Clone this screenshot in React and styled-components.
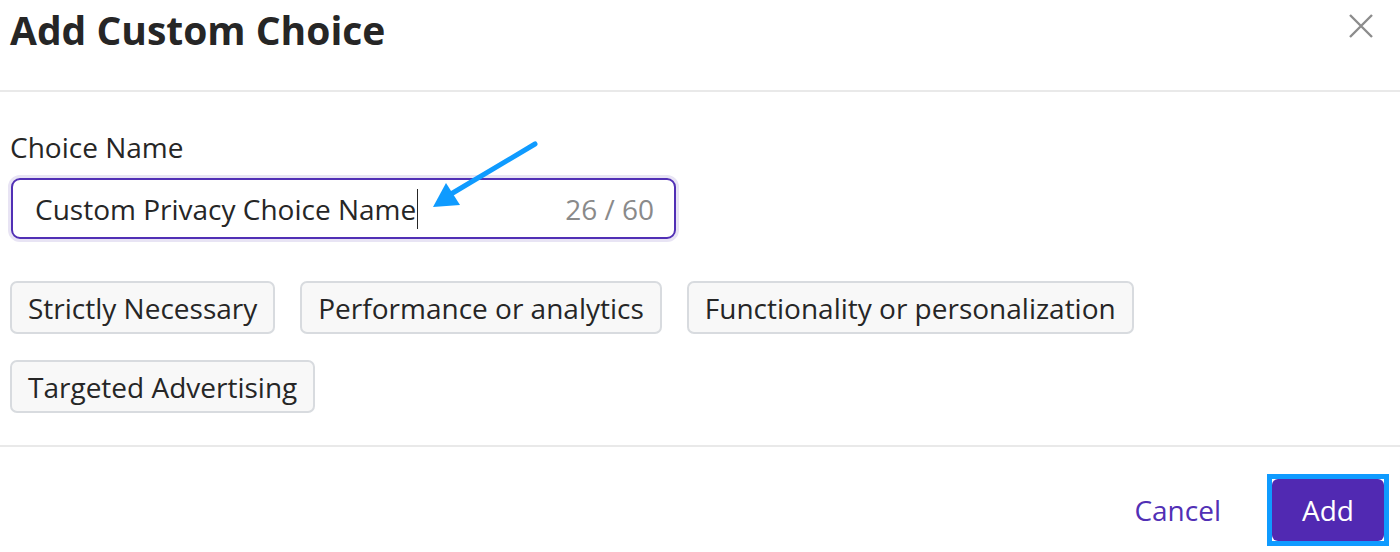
import styled, { createGlobalStyle } from "styled-components";

const GlobalStyle = createGlobalStyle`
  html, body {
    margin: 0;
    padding: 0;
    background: #ffffff;
    font-family: "Open Sans", "Noto Sans", sans-serif;
    color: #262626;
  }
`;

const Dialog = styled.div`
  width: 1400px;
  height: 552px;
  background: #fff;
  display: flex;
  flex-direction: column;
  overflow: hidden;
`;

const Header = styled.div`
  display: flex;
  justify-content: space-between;
  align-items: flex-start;
  height: 92px;
  padding: 0 26px 0 10px;
  border-bottom: 2px solid #e9e9e9;
  box-sizing: border-box;
`;

const Title = styled.h1`
  margin: 2px 0 0;
  font-size: 39px;
  font-weight: 700;
  line-height: 56px;
  color: #262626;
`;

const CloseButton = styled.button`
  margin-top: 13px;
  width: 26px;
  height: 26px;
  padding: 0;
  border: none;
  background: none;
  display: flex;
  align-items: center;
  justify-content: center;
`;

const Body = styled.div`
  padding: 36px 10px 0;
  height: 355px;
  box-sizing: border-box;
  border-bottom: 2px solid #e9e9e9;
  position: relative;
`;

const Label = styled.div`
  font-size: 28px;
  line-height: 38px;
  color: #262626;
  margin-bottom: 9px;
`;

const InputRing = styled.div`
  width: 671px;
  height: 67px;
  margin-left: -2px;
  box-sizing: border-box;
  border: 3px solid #e8e4f4;
  border-radius: 12px;
  display: flex;
`;

const InputBox = styled.div`
  flex: 1;
  border: 2px solid #5130b5;
  border-radius: 9px;
  display: flex;
  align-items: center;
  justify-content: space-between;
  padding: 0 20px 0 22px;
  font-size: 28px;
`;

const InputText = styled.span`
  color: #262626;
  border-right: 1.5px solid #262626;
  line-height: 40px;
  padding-right: 1px;
`;

const Counter = styled.span`
  color: #8a8a8a;
`;

const ChipList = styled.div`
  display: flex;
  flex-wrap: wrap;
  gap: 26px 25px;
  margin-top: 39px;
  width: 1200px;
`;

const Chip = styled.button`
  height: 53px;
  padding: 0 16px;
  font-family: inherit;
  font-size: 28px;
  color: #262626;
  background: #f8f8f8;
  border: 2px solid #d8dbdf;
  border-radius: 7px;
`;

const Arrow = styled.svg`
  position: absolute;
  left: 425px;
  top: 43px;
  pointer-events: none;
`;

const Footer = styled.div`
  flex: 1;
  display: flex;
  justify-content: flex-end;
  align-items: center;
  padding: 21px 11px 0 0;
  gap: 46px;
`;

const CancelButton = styled.button`
  border: none;
  background: none;
  padding: 0;
  font-family: inherit;
  font-size: 28px;
  color: #5130b5;
`;

const FocusRing = styled.div`
  border: 5px solid #0f9bff;
  padding: 0;
  display: flex;
`;

const AddButton = styled.button`
  width: 112px;
  height: 62px;
  border: none;
  border-radius: 6px;
  background: #5129b2;
  color: #fff;
  font-family: inherit;
  font-size: 28px;
  padding: 0;
`;

const chips = [
  "Strictly Necessary",
  "Performance or analytics",
  "Functionality or personalization",
  "Targeted Advertising",
];

export default function App() {
  return (
    <>
      <GlobalStyle />
      <Dialog>
        <Header>
          <Title>Add Custom Choice</Title>
          <CloseButton aria-label="Close">
            <svg width="24" height="24" viewBox="0 0 24 24">
              <path d="M1 1 L23 23 M23 1 L1 23" stroke="#8c8c8c" strokeWidth="2.4" />
            </svg>
          </CloseButton>
        </Header>
        <Body>
          <Label>Choice Name</Label>
          <InputRing>
            <InputBox>
              <InputText>Custom Privacy Choice Name</InputText>
              <Counter>26 / 60</Counter>
            </InputBox>
          </InputRing>
          <ChipList>
            {chips.map((c) => (
              <Chip key={c}>{c}</Chip>
            ))}
          </ChipList>
          <Arrow width="120" height="80" viewBox="0 0 120 80">
            <path d="M110 9 L26 59" stroke="#0f9bff" strokeWidth="5" strokeLinecap="round" />
            <path d="M8 72 L21 48 L35 70 Z" fill="#0f9bff" />
          </Arrow>
        </Body>
        <Footer>
          <CancelButton>Cancel</CancelButton>
          <FocusRing>
            <AddButton>Add</AddButton>
          </FocusRing>
        </Footer>
      </Dialog>
    </>
  );
}
